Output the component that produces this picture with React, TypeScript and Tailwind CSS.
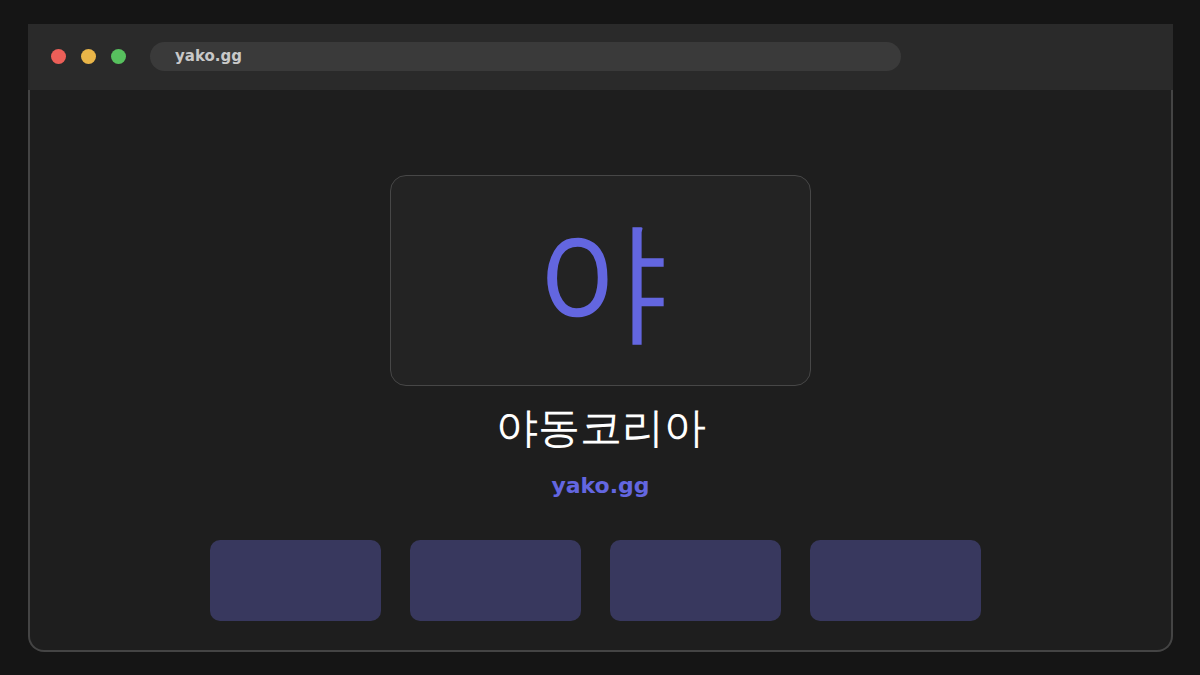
import React from "react";

export default function App() {
  return (
    <div className="w-[1200px] h-[675px] bg-[#151515] pt-[24px] pl-[28px]" style={{ fontFamily: '"DejaVu Sans", sans-serif' }}>
      <div className="w-[1145px] h-[628px] flex flex-col">
        <div className="h-[66px] bg-[#2a2a2a] flex items-center pl-[23px] shrink-0">
          <div className="flex gap-[15px] -mt-[1px]">
            <div className="w-[15px] h-[15px] rounded-full bg-[#ec5f58]" />
            <div className="w-[15px] h-[15px] rounded-full bg-[#e9b548]" />
            <div className="w-[15px] h-[15px] rounded-full bg-[#57c15e]" />
          </div>
          <div className="ml-[24px] w-[751px] h-[29px] -mt-[1px] rounded-full bg-[#3a3a3a] flex items-center pl-[25px]">
            <span className="text-[15px] font-bold text-[#c8c8c8]">yako.gg</span>
          </div>
        </div>
        <div className="flex-1 bg-[#1e1e1e] border-x-2 border-b-2 border-[#444444] rounded-b-[16px] flex flex-col items-center">
          <div className="mt-[85px] w-[421px] h-[211px] rounded-[16px] border border-[#474747] bg-[#232323] flex items-center justify-center">
            <span className="text-[132px] leading-none text-[#6366e0] -mt-[2px]">야</span>
          </div>
          <div className="mt-[17px] text-[42px] leading-[50px] text-white">야동코리아</div>
          <div className="mt-[19px] text-[22px] leading-[28px] font-bold text-[#6366e0]">yako.gg</div>
          <div className="mt-[40px] mr-[10px] flex gap-[29px]">
            <div className="w-[171px] h-[81px] rounded-[10px] bg-[#38385e]" />
            <div className="w-[171px] h-[81px] rounded-[10px] bg-[#38385e]" />
            <div className="w-[171px] h-[81px] rounded-[10px] bg-[#38385e]" />
            <div className="w-[171px] h-[81px] rounded-[10px] bg-[#38385e]" />
          </div>
        </div>
      </div>
    </div>
  );
}
